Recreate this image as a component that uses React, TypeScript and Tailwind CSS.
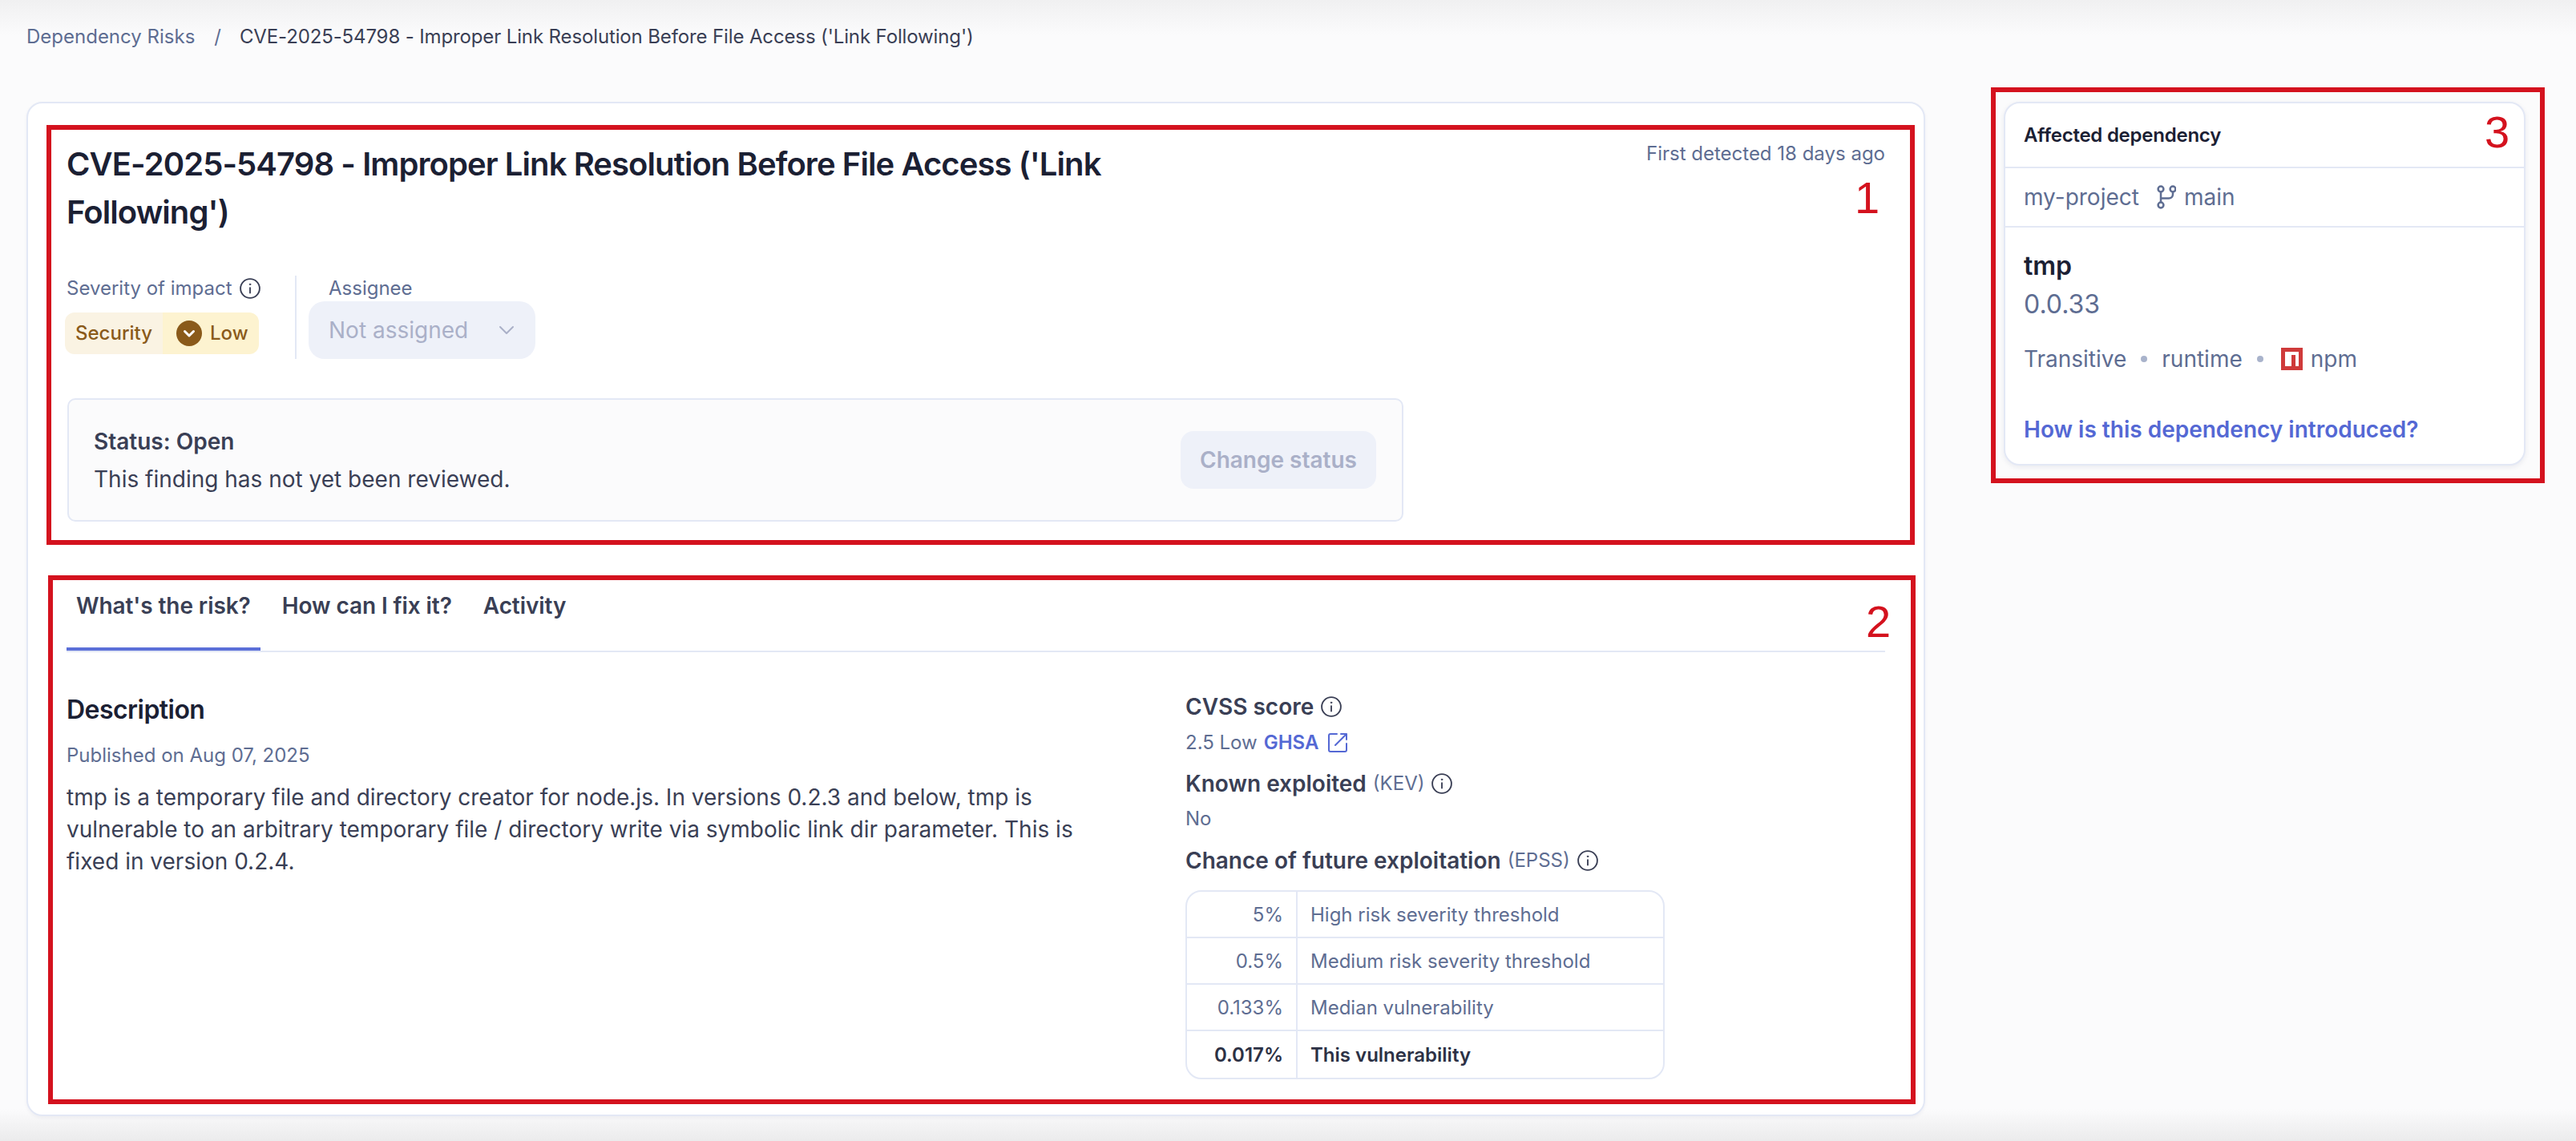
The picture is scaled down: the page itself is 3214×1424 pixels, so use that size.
import React from "react";
import { ChevronDown } from "lucide-react";

const InfoIcon = ({ className = "" }: { className?: string }) => (
  <svg viewBox="0 0 24 24" className={className} fill="none" stroke="#3a3f55" strokeWidth="1.6" strokeLinecap="round">
    <circle cx="12" cy="12" r="10.2" />
    <path d="M12 11.2v5.6" />
    <circle cx="12" cy="7.6" r="0.7" fill="#3a3f55" strokeWidth="0.8" />
  </svg>
);

const Row = ({ v, l, strong }: { v: string; l: string; strong?: boolean }) => (
  <div className={`grid h-[58px] grid-cols-[138px_1fr] items-stretch border-b-2 border-[#e3e8f5] text-[24px] last:border-b-0 ${strong ? "font-semibold text-[#2c3145]" : "text-[#5e6d92]"}`}>
    <div className="flex items-center justify-end border-r-2 border-[#e3e8f5] pt-[2px] pr-[16px]">{v}</div>
    <div className="flex items-center pt-[2px] pl-[16px]">{l}</div>
  </div>
);

const Dot = () => <span className="mx-[18px] h-[8px] w-[8px] rounded-full bg-[#a9b3cb]" />;

const RedBox = ({ className }: { className: string }) => (
  <div className={`pointer-events-none absolute border-[6px] border-[#d4121e] ${className}`} />
);

const Digit = ({ n, className }: { n: string; className: string }) => (
  <div className={`absolute text-[56px] leading-[56px] font-light text-[#d4121e] [font-family:'Liberation_Sans',sans-serif] ${className}`}>{n}</div>
);

export default function App() {
  return (
    <div className="relative flex h-[1424px] w-[3214px] flex-col overflow-hidden bg-[linear-gradient(to_bottom,#f0f0f1_0px,#fbfbfc_44px,#fbfbfc_1384px,#ebebec_1424px)] [font-family:Inter,'Liberation_Sans',sans-serif]">
      <nav className="flex h-[92px] shrink-0 items-center pl-[33px] text-[24px]">
        <span className="text-[#5e6d92]">Dependency Risks</span>
        <span className="mr-[23px] ml-[24px] text-[#5e6d92]">/</span>
        <span className="tracking-[-0.13px] text-[#3a3f55]">CVE-2025-54798 - Improper Link Resolution Before File Access ('Link Following')</span>
      </nav>

      <div className="mt-[35px] flex items-start pl-[33px]">
        <main className="h-[1266px] w-[2369px] shrink-0 rounded-[20px] border-2 border-[#e3e8f5] bg-white pr-[48px] pl-[48px] shadow-[0_2px_4px_rgba(30,40,90,0.05)]">
          <header className="flex items-start justify-between pt-[46px]">
            <h1 className="w-[1400px] text-[40px] leading-[60px] font-semibold tracking-[-0.023em] text-[#1b2033]">
              CVE-2025-54798 - Improper Link Resolution Before File Access ('Link Following')
            </h1>
            <div className="-mt-[3px] text-[24px] leading-[40px] text-[#5e6d92]">First detected 18 days ago</div>
          </header>

          <div className="mt-[49px] flex h-[104px]">
            <div className="w-[287px] border-r-2 border-[#e3e8f5]">
              <div className="flex h-[32px] items-center gap-[8px] text-[24px] text-[#5e6d92]">
                Severity of impact <InfoIcon className="h-[28px] w-[28px]" />
              </div>
              <div className="mt-[14px] -ml-[2px] flex h-[52px] w-[242px] overflow-hidden rounded-[12px] text-[24px] font-medium text-[#8a5a1a]">
                <div className="flex w-[122px] items-center justify-center bg-[#faf3e3]">Security</div>
                <div className="flex flex-1 items-center gap-[10px] bg-[#fdf3d0] pl-[17px]">
                  <svg viewBox="0 0 32 32" className="h-[32px] w-[32px]">
                    <circle cx="16" cy="16" r="16" fill="#8a5a1a" />
                    <path d="M10.5 13.5 16 19l5.5-5.5" fill="none" stroke="#fff" strokeWidth="3" strokeLinecap="round" strokeLinejoin="round" />
                  </svg>
                  Low
                </div>
              </div>
            </div>
            <div className="ml-[15px]">
              <div className="flex h-[32px] items-center pl-[25px] text-[24px] text-[#5e6d92]">Assignee</div>
              <div className="flex h-[72px] w-[283px] items-center justify-between rounded-[20px] bg-[#eef1f9] pr-[20px] pl-[25px] text-[28px] text-[#aab0c8]">
                Not assigned
                <ChevronDown className="h-[32px] w-[32px]" strokeWidth={1.5} />
              </div>
            </div>
          </div>

          <section className="mt-[49px] ml-[1px] flex h-[154px] w-[1667px] items-center justify-between rounded-[10px] border-2 border-[#e3e8f5] bg-[#fbfbfc] pr-[32px] pl-[31px]">
            <div className="text-[#3a3f55]">
              <div className="text-[28px] leading-[40px] font-semibold">Status: Open</div>
              <div className="mt-[7px] text-[28px] leading-[40px]">This finding has not yet been reviewed.</div>
            </div>
            <button className="h-[72px] w-[244px] rounded-[16px] bg-[#eef1f9] text-[28px] font-semibold text-[#aab0c8]">Change status</button>
          </section>

          <div className="mt-[61px] flex gap-[15px] border-b-2 border-[#e3e8f5] text-[28px] leading-[40px] font-semibold tracking-[-0.003em] text-[#3a3f55]">
            <div className="h-[100px] border-b-4 border-[#5b6fd8] px-[12px] pt-[24px]">What's the risk?</div>
            <div className="h-[100px] px-[12px] pt-[24px]">How can I fix it?</div>
            <div className="h-[100px] px-[12px] pt-[24px]">Activity</div>
          </div>

          <div className="flex">
            <div className="w-[1396px] shrink-0 pt-[48px]">
              <h2 className="text-[32px] leading-[48px] font-semibold tracking-[-0.017em] text-[#1b2033]">Description</h2>
              <div className="mt-[15px] text-[24px] leading-[36px] text-[#5e6d92]">Published on Aug 07, 2025</div>
              <p className="mt-[14px] w-[1300px] text-[28px] leading-[40px] text-[#3a3f55]">
                tmp is a temporary file and directory creator for node.js. In versions 0.2.3 and below, tmp is vulnerable to an arbitrary temporary file / directory write via symbolic link dir parameter. This is fixed in version 0.2.4.
              </p>
            </div>
            <div className="pt-[48px]">
              <div className="flex items-center gap-[8px] text-[28px] leading-[40px] font-semibold text-[#3a3f55]">
                CVSS score <InfoIcon className="h-[28px] w-[28px]" />
              </div>
              <div className="mt-[9px] flex items-center text-[24px] leading-[32px] text-[#5e6d92]">
                2.5 Low
                <span className="ml-[8px] font-semibold text-[#5468d4]">GHSA</span>
                <svg viewBox="0 0 24 24" className="ml-[12px] h-[24px] w-[24px]" fill="none" stroke="#5468d4" strokeWidth="2" strokeLinecap="round" strokeLinejoin="round">
                  <path d="M11 1H3a2 2 0 0 0-2 2v18a2 2 0 0 0 2 2h18a2 2 0 0 0 2-2v-8" />
                  <path d="M16 1h7v7M23 1 9 15" />
                </svg>
              </div>
              <div className="mt-[15px] flex items-center text-[28px] leading-[40px] font-semibold text-[#3a3f55]">
                Known exploited
                <span className="ml-[8px] text-[24px] font-normal text-[#5e6d92]">(KEV)</span>
                <InfoIcon className="ml-[8px] h-[28px] w-[28px]" />
              </div>
              <div className="mt-[8px] text-[24px] leading-[32px] text-[#5e6d92]">No</div>
              <div className="mt-[16px] flex items-center text-[28px] leading-[40px] font-semibold text-[#3a3f55]">
                Chance of future exploitation
                <span className="ml-[8px] text-[24px] font-normal text-[#5e6d92]">(EPSS)</span>
                <InfoIcon className="ml-[8px] h-[28px] w-[28px]" />
              </div>
              <div className="mt-[17px] w-[598px] overflow-hidden rounded-[20px] border-2 border-[#e3e8f5]">
                <Row v="5%" l="High risk severity threshold" />
                <Row v="0.5%" l="Medium risk severity threshold" />
                <Row v="0.133%" l="Median vulnerability" />
                <Row v="0.017%" l="This vulnerability" strong />
              </div>
            </div>
          </div>
        </main>

        <aside className="ml-[98px] h-[454px] w-[651px] shrink-0 rounded-[20px] border-2 border-[#e3e8f5] bg-white shadow-[0_2px_6px_rgba(30,40,90,0.08)]">
          <div className="flex h-[81px] items-center border-b-2 border-[#e3e8f5] pl-[23px] text-[24px] font-semibold tracking-[-0.01em] text-[#1b2033]">Affected dependency</div>
          <div className="flex h-[74px] items-center border-b-2 border-[#e3e8f5] pl-[23px] text-[28px] text-[#5e6d92]">
            my-project
            <svg viewBox="0 0 24 30" className="mr-[10px] ml-[22px] h-[30px] w-[24px]" fill="none" stroke="#5e6d92" strokeWidth="2.5">
              <circle cx="5" cy="5" r="3.4" />
              <circle cx="20" cy="5" r="3.4" />
              <circle cx="5" cy="25" r="3.4" />
              <path d="M5 8.4v13.2M20 8.4v3.1a5 5 0 0 1-5 5H5" />
            </svg>
            main
          </div>
          <div className="px-[23px] pt-[26px]">
            <div className="text-[32px] leading-[44px] font-semibold text-[#1b2033]">tmp</div>
            <div className="mt-[4px] text-[32px] leading-[44px] text-[#5e6d92]">0.0.33</div>
            <div className="mt-[26px] flex h-[40px] items-center text-[28px] text-[#5e6d92]">
              Transitive
              <Dot />
              runtime
              <Dot />
              <svg viewBox="0 0 27 28" className="mr-[10px] ml-[4px] h-[28px] w-[27px]">
                <rect width="27" height="28" fill="#cf3a3a" />
                <rect x="5" y="5" width="17" height="18" fill="#fff" />
                <rect x="13" y="9" width="5" height="14" fill="#cf3a3a" />
              </svg>
              npm
            </div>
            <div className="mt-[48px] text-[28px] leading-[40px] font-semibold text-[#5468d4]">How is this dependency introduced?</div>
          </div>
        </aside>
      </div>

      <RedBox className="top-[156px] left-[58px] h-[524px] w-[2331px]" />
      <RedBox className="top-[718px] left-[60px] h-[660px] w-[2330px]" />
      <RedBox className="top-[109px] left-[2484px] h-[494px] w-[691px]" />
      <Digit n="1" className="top-[219px] left-[2314px]" />
      <Digit n="2" className="top-[748px] left-[2328px]" />
      <Digit n="3" className="top-[137px] left-[3100px]" />
    </div>
  );
}
